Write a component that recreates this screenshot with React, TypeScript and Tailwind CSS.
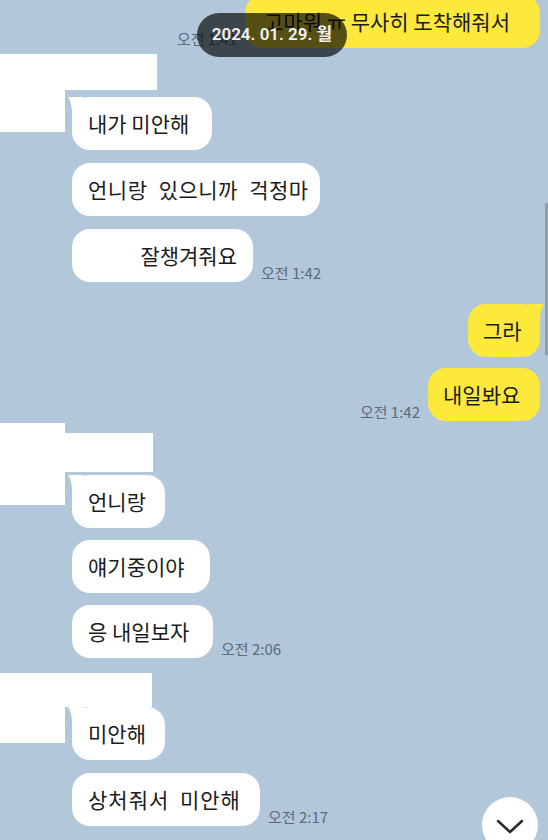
import React from "react";

function TailLeft({ color = "#ffffff" }: { color?: string }) {
  return (
    <svg className="absolute -left-[4px] top-0" width="16" height="16" viewBox="0 0 16 16">
      <path d="M0 0 H16 V16 H4 C4 9 2.5 3.5 0 0 Z" fill={color} />
    </svg>
  );
}

function TailRight({ color = "#fde83c" }: { color?: string }) {
  return (
    <svg className="absolute -right-[4px] top-0" width="16" height="16" viewBox="0 0 16 16">
      <path d="M16 0 H0 V16 H12 C12 9 13.5 3.5 16 0 Z" fill={color} />
    </svg>
  );
}

function Time({ t }: { t: string }) {
  return <span className="pb-[2px] text-[15px] leading-none text-[#5b6b7b] whitespace-nowrap">{t}</span>;
}

type Msg = { text: string; w: string; time?: string; tail?: boolean; extra?: string };

function LeftBubble({ m }: { m: Msg }) {
  return (
    <div className="flex items-end gap-[8px]">
      <div className={`relative h-[53px] shrink-0 rounded-[18px] bg-white px-[16px] text-[21px] leading-[53px] text-[#1b1b1b] whitespace-nowrap ${m.w} ${m.extra ?? ""}`}>
        {m.tail && <TailLeft />}
        <span className="relative">{m.text}</span>
      </div>
      {m.time && <Time t={m.time} />}
    </div>
  );
}

export default function App() {
  const g1: Msg[] = [
    { text: "내가 미안해", w: "w-[140px]", tail: true },
    { text: "언니랑 있으니까 걱정마", w: "w-[248px]", extra: "[word-spacing:6px] tracking-[0.5px]" },
    { text: "잘챙겨줘요", w: "w-[181px]", time: "오전 1:42", extra: "text-right" },
  ];
  const g2: Msg[] = [
    { text: "언니랑", w: "w-[93px]", tail: true },
    { text: "얘기중이야", w: "w-[138px]" },
    { text: "응 내일보자", w: "w-[141px]", time: "오전 2:06" },
  ];
  const g3: Msg[] = [
    { text: "미안해", w: "w-[93px]", tail: true },
    { text: "상처줘서 미안해", w: "w-[188px]", time: "오전 2:17", extra: "[word-spacing:5px] tracking-[1px]" },
  ];

  return (
    <div className="relative h-[840px] w-[548px] overflow-hidden bg-[#b2c7d9] font-['Noto_Sans_CJK_KR',sans-serif]">
      <div className="flex flex-col">
        {/* top outgoing bubble */}
        <div className="-mt-[5px] flex items-end justify-end gap-[8px] pr-[8px]">
          <Time t="오전 1:41" />
          <div className="h-[53px] w-[295px] rounded-[18px] bg-[#fde83c] pl-[19px] text-[21px] leading-[53px] text-[#1b1b1b] whitespace-nowrap">
            고마워 ㅠ 무사히 도착해줘서
          </div>
        </div>

        {/* group 1 */}
        <div className="mt-[6px] flex">
          <div className="w-[65px] shrink-0">
            <div className="h-[78px] bg-white" />
          </div>
          <div className="flex flex-col">
            <div className="h-[36px] w-[92px] bg-white" />
            <div className="mt-[7px] flex flex-col gap-[13px] pl-[7px]">
              {g1.map((m, i) => (
                <LeftBubble key={i} m={m} />
              ))}
            </div>
          </div>
        </div>

        {/* outgoing */}
        <div className="mt-[22px] flex flex-col items-end gap-[11px] pr-[8px]">
          <div className="relative h-[53px] w-[72px] rounded-[18px] bg-[#fde83c] px-[15px] text-[21px] leading-[53px] text-[#1b1b1b]">
            <TailRight />
            <span className="relative">그라</span>
          </div>
          <div className="flex items-end gap-[8px]">
            <Time t="오전 1:42" />
            <div className="h-[53px] w-[112px] rounded-[18px] bg-[#fde83c] px-[15px] text-[21px] leading-[53px] text-[#1b1b1b] whitespace-nowrap">
              내일봐요
            </div>
          </div>
        </div>

        {/* group 2 */}
        <div className="mt-[2px] flex">
          <div className="w-[65px] shrink-0">
            <div className="h-[82px] bg-white" />
          </div>
          <div className="flex flex-col pt-[10px]">
            <div className="h-[39px] w-[88px] bg-white" />
            <div className="mt-[3px] flex flex-col gap-[12px] pl-[7px]">
              {g2.map((m, i) => (
                <LeftBubble key={i} m={m} />
              ))}
            </div>
          </div>
        </div>

        {/* group 3 */}
        <div className="mt-[15px] flex">
          <div className="w-[65px] shrink-0">
            <div className="h-[70px] bg-white" />
          </div>
          <div className="flex flex-col">
            <div className="h-[34px] w-[87px] bg-white" />
            <div className="flex flex-col gap-[13px] pl-[7px]">
              {g3.map((m, i) => (
                <LeftBubble key={i} m={m} />
              ))}
            </div>
          </div>
        </div>
      </div>

      {/* date overlay pill */}
      <div className="absolute left-[197px] top-[13px] flex h-[44px] w-[150px] items-center justify-center rounded-full bg-black/[0.66] font-['Roboto','Noto_Sans_CJK_KR',sans-serif] text-[17px] font-semibold text-[#f2f2f2]">
        2024. 01. 29. 월
      </div>

      {/* scrollbar */}
      <div className="absolute left-[545px] top-[203px] h-[152px] w-[3px] bg-[#8f9fb0]" />

      {/* scroll down button */}
      <div className="absolute left-[482px] top-[797px] flex h-[56px] w-[56px] items-center justify-center rounded-full bg-white pt-[4px]">
        <svg width="28" height="16" viewBox="0 0 28 16" fill="none">
          <polyline points="2,2 14,13 26,2" stroke="#2b2b2b" strokeWidth="2.5" strokeLinecap="round" strokeLinejoin="round" />
        </svg>
      </div>
    </div>
  );
}
